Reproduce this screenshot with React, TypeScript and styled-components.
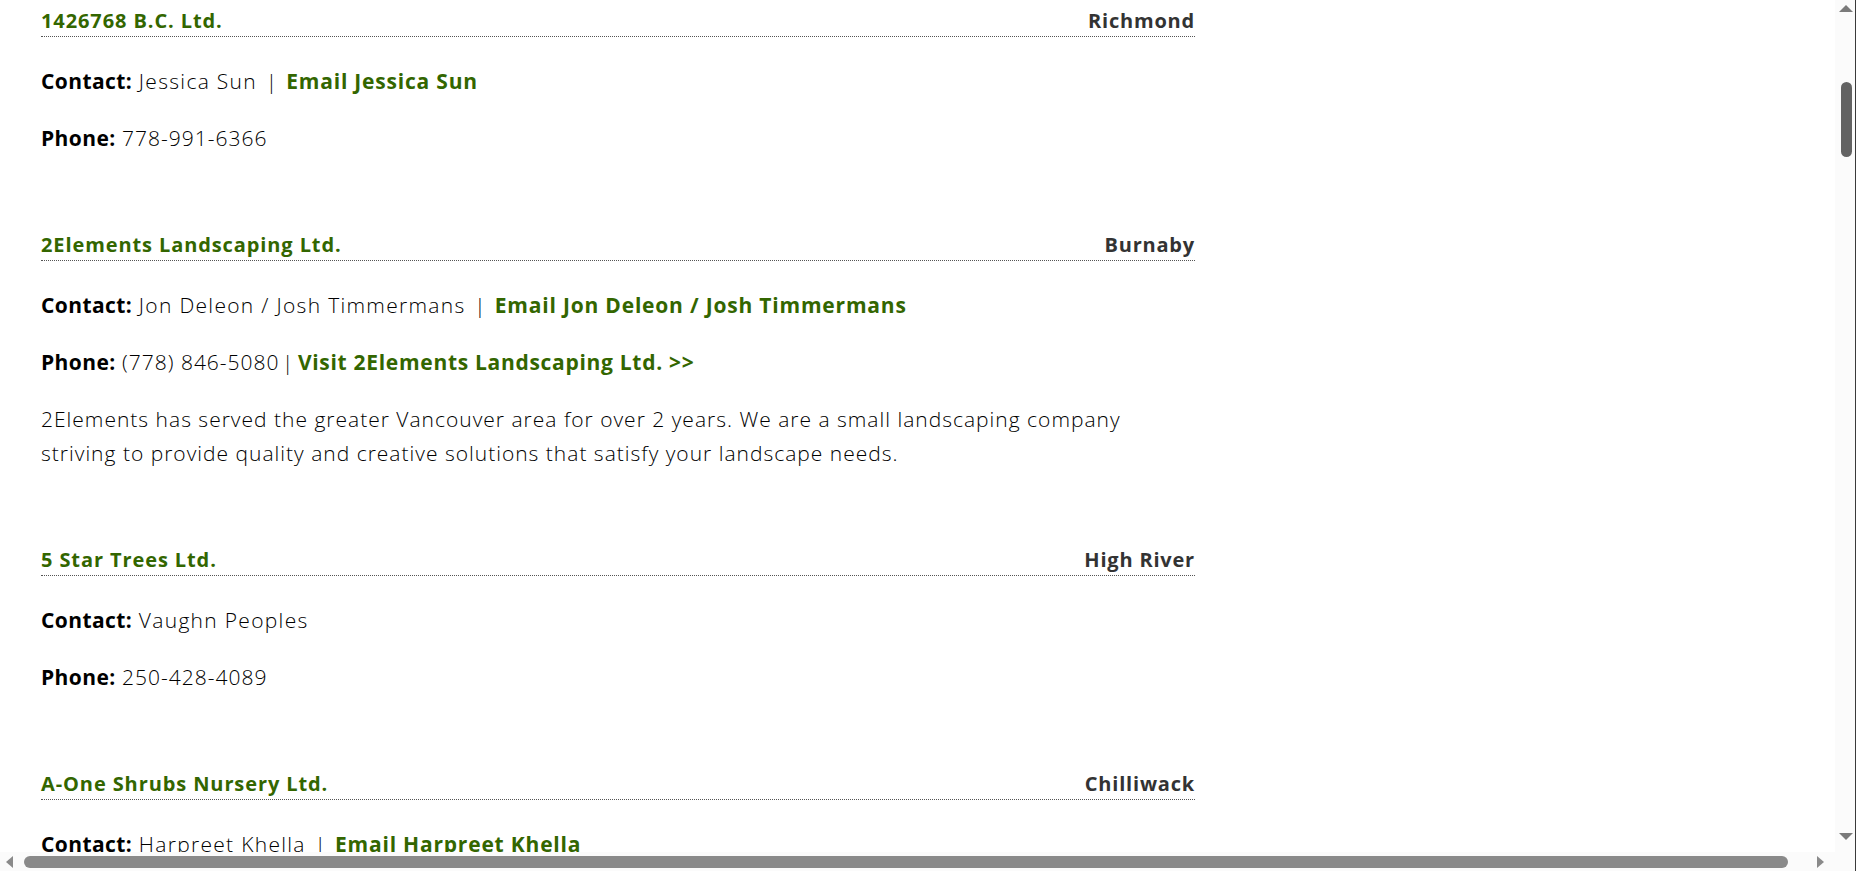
import React from "react";
import styled, { createGlobalStyle } from "styled-components";

const Global = createGlobalStyle`
  html, body { margin: 0; padding: 0; height: 100%; overflow: hidden; background: #fff; }
  #root { height: 100%; }
`;

const Frame = styled.div`
  display: flex;
  flex-direction: column;
  width: 100vw;
  height: 100vh;
  background: #fff;
  font-family: "Open Sans", "Lato", sans-serif;
`;

const MainRow = styled.div`
  flex: 1;
  display: flex;
  min-height: 0;
`;

const Viewport = styled.div`
  flex: 1;
  overflow: hidden;
  padding: 9px 0 0 41px;
`;

const List = styled.div`
  width: 1154px;
`;

const Entry = styled.section`
  display: flex;
  flex-direction: column;
  margin-bottom: 55px;
`;

const TitleRow = styled.div`
  display: flex;
  justify-content: space-between;
  align-items: baseline;
  border-bottom: 1px dotted #555;
  padding-bottom: 3px;
  margin-bottom: 27px;
  font-size: 20px;
  line-height: 24px;
  font-weight: 700;
  letter-spacing: 0.9px;
`;

const Company = styled.a`
  color: #336600;
  text-decoration: none;
`;

const City = styled.span`
  color: #333;
  letter-spacing: 0.8px;
`;

const Para = styled.p<{ $wide?: boolean }>`
  margin: 0 0 23px;
  font-size: 21px;
  line-height: 34px;
  font-weight: 300;
  letter-spacing: ${(p) => (p.$wide ? "1.3px" : "1px")};
  color: #000;
`;

const Label = styled.strong`
  font-weight: 700;
  letter-spacing: 0.4px;
  color: #000;
`;

const GreenLink = styled.a<{ $spacing?: string }>`
  color: #336600;
  font-weight: 700;
  letter-spacing: ${(p) => p.$spacing ?? "0.8px"};
  text-decoration: none;
`;

const Sep = styled.span<{ $tight?: boolean }>`
  margin: ${(p) => (p.$tight ? "0 -3px 0 -4px" : "0 1px 0 2px")};
`;

const VScroll = styled.div`
  width: 21px;
  display: flex;
  flex-direction: column;
  align-items: center;
  background: #fbfbfb;
  border-right: 1px solid #3a3a3a;
  box-sizing: border-box;
  padding-left: 2px;
`;

const ArrowUp = styled.div`
  width: 0;
  height: 0;
  border-left: 7px solid transparent;
  border-right: 7px solid transparent;
  border-bottom: 7px solid #7a7a7a;
  margin-top: 5px;
`;

const ArrowDown = styled.div`
  width: 0;
  height: 0;
  border-left: 7px solid transparent;
  border-right: 7px solid transparent;
  border-top: 7px solid #7a7a7a;
  margin-top: auto;
  margin-bottom: 12px;
`;

const VThumb = styled.div`
  width: 11px;
  height: 75px;
  border-radius: 6px;
  background: #636363;
  margin-top: 70px;
`;

const HScroll = styled.div`
  height: 19px;
  display: flex;
  align-items: center;
  background: #fbfbfb;
  border-right: 1px solid #3a3a3a;
  box-sizing: border-box;
`;

const ArrowLeft = styled.div`
  width: 0;
  height: 0;
  border-top: 6px solid transparent;
  border-bottom: 6px solid transparent;
  border-right: 7px solid #8a8a8a;
  margin-left: 6px;
`;

const ArrowRight = styled.div`
  width: 0;
  height: 0;
  border-top: 6px solid transparent;
  border-bottom: 6px solid transparent;
  border-left: 7px solid #8a8a8a;
  margin-left: auto;
  margin-right: 31px;
`;

const HThumb = styled.div`
  height: 12px;
  width: 1764px;
  border-radius: 6px;
  background: #8a8a8a;
  margin-left: 11px;
`;

type Item = {
  name: string;
  city: string;
  contact: string;
  phone: string;
  site?: boolean;
  desc?: React.ReactNode;
  email?: boolean;
};

const items: Item[] = [
  { name: "1426768 B.C. Ltd.", city: "Richmond", contact: "Jessica Sun", phone: "778-991-6366", email: true },
  {
    name: "2Elements Landscaping Ltd.",
    city: "Burnaby",
    contact: "Jon Deleon / Josh Timmermans",
    phone: "(778) 846-5080",
    site: true,
    email: true,
    desc: (
      <>
        2Elements has served the greater Vancouver area for over 2 years. We are a small landscaping company
        <br />
        striving to provide quality and creative solutions that satisfy your landscape needs.
      </>
    ),
  },
  { name: "5 Star Trees Ltd.", city: "High River", contact: "Vaughn Peoples", phone: "250-428-4089" },
  { name: "A-One Shrubs Nursery Ltd.", city: "Chilliwack", contact: "Harpreet Khella", phone: "604-000-0000", email: true },
];

export default function App() {
  return (
    <Frame>
      <Global />
      <MainRow>
        <Viewport>
          <List>
            {items.map((it) => (
              <Entry key={it.name}>
                <TitleRow>
                  <Company href="#">{it.name}</Company>
                  <City>{it.city}</City>
                </TitleRow>
                <Para $wide>
                  <Label>Contact:</Label> {it.contact}
                  {it.email && (
                    <>
                      {" "}
                      <Sep>|</Sep> <GreenLink href="#">Email {it.contact}</GreenLink>
                    </>
                  )}
                </Para>
                <Para>
                  <Label>Phone:</Label> {it.phone}
                  {it.site && (
                    <>
                      {" "}
                      <Sep $tight>|</Sep>{" "}
                      <GreenLink href="#" $spacing="0.7px">
                        Visit {it.name} &gt;&gt;
                      </GreenLink>
                    </>
                  )}
                </Para>
                {it.desc && <Para>{it.desc}</Para>}
              </Entry>
            ))}
          </List>
        </Viewport>
        <VScroll>
          <ArrowUp />
          <VThumb />
          <ArrowDown />
        </VScroll>
      </MainRow>
      <HScroll>
        <ArrowLeft />
        <HThumb />
        <ArrowRight />
      </HScroll>
    </Frame>
  );
}
